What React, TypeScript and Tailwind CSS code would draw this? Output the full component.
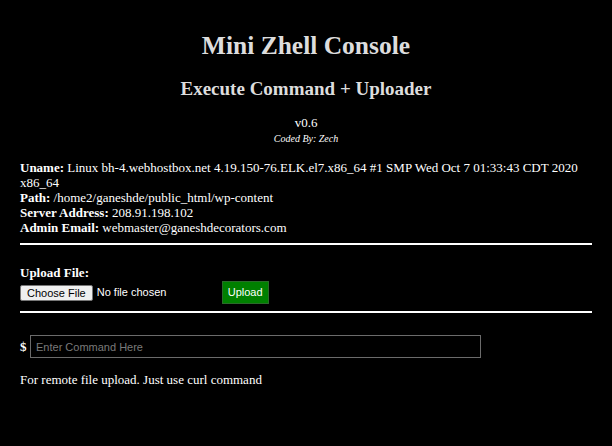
import React from "react";

const App: React.FC = () => {
  return (
    <div className="min-h-[446px] w-full bg-black text-[#dddddd] font-['Liberation_Serif',serif] px-5 pt-[30px]">
      <h1 className="text-center text-[25.5px] font-bold leading-[32px] text-[#dddddd]">Mini Zhell Console</h1>
      <h2 className="mt-[16px] text-center text-[19px] font-bold leading-[22px] text-[#dddddd]">
        Execute Command + Uploader
      </h2>
      <div className="mt-[15px] text-center text-[13px] leading-[15px] text-white">v0.6</div>
      <div className="text-center text-[10px] italic leading-[17px] text-white">Coded By: Zech</div>

      <div className="mt-[13px] text-[13px] leading-[15px] text-white">
        <div>
          <b>Uname:</b> Linux bh-4.webhostbox.net 4.19.150-76.ELK.el7.x86_64 #1 SMP Wed Oct 7 01:33:43 CDT 2020 x86_64
        </div>
        <div>
          <b>Path:</b> /home2/ganeshde/public_html/wp-content
        </div>
        <div>
          <b>Server Address:</b> 208.91.198.102
        </div>
        <div>
          <b>Admin Email:</b> webmaster@ganeshdecorators.com
        </div>
      </div>
      <hr className="mt-[8px] border-t-2 border-white" />

      <div className="mt-[20px] text-[13px] font-bold leading-[15px] text-white">Upload File:</div>
      <div className="mt-[1px] flex h-[23px] items-center font-['Liberation_Sans',Arial,sans-serif] text-[11px] text-white">
        <span className="rounded-[2px] border border-[#767676] bg-[#efefef] px-[6px] text-[11px] leading-[14px] text-black">
          Choose File
        </span>
        <span className="ml-[4px] w-[125px]">No file chosen</span>
        <button className="h-[23px] border border-[#2a6a2a] bg-[#008000] px-[5px] text-[11px] text-white">Upload</button>
      </div>
      <hr className="mt-[7px] border-t-2 border-white" />

      <div className="mt-[22px] flex items-center text-[13px] font-bold text-white">
        <span className="w-[10px]">$</span>
        <input
          className="h-[23px] w-[451px] border border-[#6b6b6b] bg-black px-[5px] font-['Liberation_Sans',Arial,sans-serif] text-[11px] font-normal text-white placeholder:text-[#7a7a7a]"
          placeholder="Enter Command Here"
        />
      </div>
      <div className="mt-[14px] text-[13px] leading-[15px] text-white">For remote file upload. Just use curl command</div>
    </div>
  );
};

export default App;
